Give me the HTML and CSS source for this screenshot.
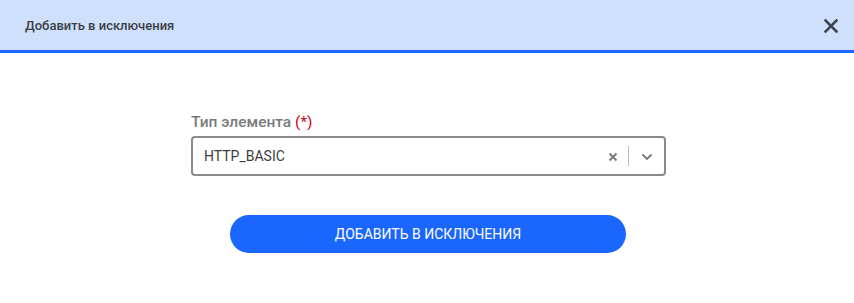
FILE: index.html
```html
<!DOCTYPE html>
<html lang="ru">
<head>
    <meta charset="UTF-8">
    <title>Добавить в исключения</title>
    <link rel="stylesheet" href="styles.css">
</head>
<body>
    <div class="dialog">
        <div class="dialog-header">
            <h2 class="dialog-title">Добавить в исключения</h2>
            <button class="close-button">
                <svg width="14" height="14" viewBox="0 0 14 14"><path d="M1.5 1.5 L12.5 12.5 M12.5 1.5 L1.5 12.5" stroke="#3d4650" stroke-width="2.6" stroke-linecap="square"/></svg>
            </button>
        </div>
        <div class="dialog-body">
            <div class="field">
                <label class="field-label">Тип элемента <span class="required">(*)</span></label>
                <div class="select">
                    <span class="select-value">HTTP_BASIC</span>
                    <span class="select-clear">
                        <svg width="10" height="10" viewBox="0 0 10 10"><path d="M1.5 1.5 L8.5 8.5 M8.5 1.5 L1.5 8.5" stroke="#777" stroke-width="1.8"/></svg>
                    </span>
                    <span class="select-sep"></span>
                    <span class="select-arrow">
                        <svg width="12" height="8" viewBox="0 0 12 8"><path d="M1.5 1.5 L6 6 L10.5 1.5" fill="none" stroke="#777" stroke-width="1.8"/></svg>
                    </span>
                </div>
            </div>
            <button class="submit-button">ДОБАВИТЬ В ИСКЛЮЧЕНИЯ</button>
        </div>
    </div>
</body>
</html>
```

FILE: styles.css
```css
body {
    margin: 0;
    font-family: Roboto, "Liberation Sans", sans-serif;
    background-color: #fff;
}

.dialog-header {
    height: 50px;
    background-color: #cfe0fd;
    border-bottom: 3px solid #1a66ff;
    display: flex;
    align-items: center;
    justify-content: space-between;
    padding: 0 14px 0 25px;
}

.dialog-title {
    margin: 0;
    font-size: 13px;
    font-weight: 500;
    color: #3a3f45;
}

.close-button {
    border: none;
    background: none;
    padding: 0;
    width: 18px;
    height: 18px;
    display: flex;
    align-items: center;
    justify-content: center;
    margin-top: 2px;
    cursor: pointer;
}

.dialog-body {
    display: flex;
    flex-direction: column;
    align-items: center;
    padding-top: 59px;
}

.field {
    width: 475px;
    margin-left: 3px;
}

.field-label {
    display: block;
    font-size: 15.5px;
    font-weight: 500;
    color: #7a7a7a;
    margin-bottom: 4px;
    line-height: 20px;
}

.required {
    color: #d0021b;
    font-weight: 400;
}

.select {
    height: 36px;
    border: 2px solid #8a8a8a;
    border-radius: 4px;
    display: flex;
    align-items: center;
    padding-left: 11px;
}

.select-value {
    flex: 1;
    font-size: 14px;
    color: #3d3d3d;
}

.select-clear {
    display: flex;
    padding: 0 10px;
    margin-top: 2px;
}

.select-sep {
    width: 1px;
    height: 20px;
    background-color: #bbb;
}

.select-arrow {
    display: flex;
    padding: 0 11px 0 12px;
    margin-top: 2px;
}

.submit-button {
    margin-top: 39px;
    margin-left: 2px;
    width: 396px;
    height: 38px;
    border: none;
    border-radius: 19px;
    background-color: #1a66ff;
    color: #fff;
    font-family: Roboto, "Liberation Sans", sans-serif;
    font-size: 14px;
    cursor: pointer;
}
```
